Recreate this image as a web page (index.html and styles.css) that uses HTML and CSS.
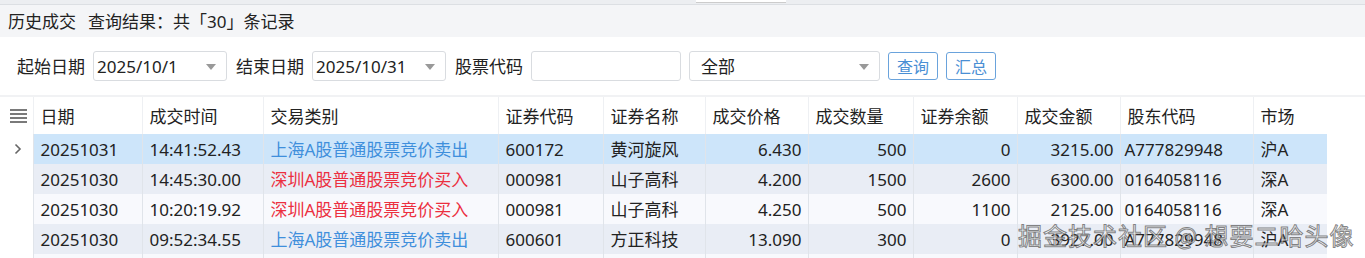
FILE: index.html
```html
<!DOCTYPE html>
<html lang="zh-CN">
<head>
    <meta charset="UTF-8">
    <title>历史成交</title>
    <link rel="stylesheet" href="styles.css">
</head>
<body>
    <div class="topStrip"><span class="tabPiece"></span></div>

    <div class="titleBar">
        <span>历史成交</span>
        <span>查询结果：共「30」条记录</span>
    </div>

    <div class="filterBar">
        <label>起始日期</label>
        <div class="select dateSelect">2025/10/1<i class="arrow"></i></div>
        <label>结束日期</label>
        <div class="select dateSelect">2025/10/31<i class="arrow"></i></div>
        <label>股票代码</label>
        <div class="codeInput"></div>
        <div class="select typeSelect">全部<i class="arrow"></i></div>
        <button class="btn">查询</button>
        <button class="btn">汇总</button>
    </div>

    <div class="tableWrap">
        <table class="grid">
            <colgroup>
                <col style="width:33px">
                <col style="width:109px">
                <col style="width:121px">
                <col style="width:235px">
                <col style="width:105px">
                <col style="width:102px">
                <col style="width:103px">
                <col style="width:105px">
                <col style="width:104px">
                <col style="width:103px">
                <col style="width:133px">
                <col style="width:74px">
            </colgroup>
            <thead>
                <tr>
                    <th class="gutter">
                        <svg width="17" height="14" viewBox="0 0 17 14">
                            <rect x="0" y="0" width="17" height="2" fill="#7a7a7a"/>
                            <rect x="0" y="4" width="17" height="2" fill="#7a7a7a"/>
                            <rect x="0" y="8" width="17" height="2" fill="#7a7a7a"/>
                            <rect x="0" y="12" width="17" height="2" fill="#7a7a7a"/>
                        </svg>
                    </th>
                    <th>日期</th>
                    <th>成交时间</th>
                    <th>交易类别</th>
                    <th>证券代码</th>
                    <th>证券名称</th>
                    <th>成交价格</th>
                    <th>成交数量</th>
                    <th>证券余额</th>
                    <th>成交金额</th>
                    <th>股东代码</th>
                    <th>市场</th>
                </tr>
            </thead>
            <tbody>
                <tr class="selected">
                    <td class="gutter">
                        <svg width="8" height="12" viewBox="0 0 8 12">
                            <path d="M1.5 1.5 L6 6 L1.5 10.5" fill="none" stroke="#666" stroke-width="1.6"/>
                        </svg>
                    </td>
                    <td>20251031</td>
                    <td>14:41:52.43</td>
                    <td class="sell">上海A股普通股票竞价卖出</td>
                    <td>600172</td>
                    <td>黄河旋风</td>
                    <td class="num">6.430</td>
                    <td class="num">500</td>
                    <td class="num">0</td>
                    <td class="num">3215.00</td>
                    <td class="tight">A777829948</td>
                    <td>沪A</td>
                </tr>
                <tr class="even">
                    <td class="gutter"></td>
                    <td>20251030</td>
                    <td>14:45:30.00</td>
                    <td class="buy">深圳A股普通股票竞价买入</td>
                    <td>000981</td>
                    <td>山子高科</td>
                    <td class="num">4.200</td>
                    <td class="num">1500</td>
                    <td class="num">2600</td>
                    <td class="num">6300.00</td>
                    <td class="tight">0164058116</td>
                    <td>深A</td>
                </tr>
                <tr class="odd">
                    <td class="gutter"></td>
                    <td>20251030</td>
                    <td>10:20:19.92</td>
                    <td class="buy">深圳A股普通股票竞价买入</td>
                    <td>000981</td>
                    <td>山子高科</td>
                    <td class="num">4.250</td>
                    <td class="num">500</td>
                    <td class="num">1100</td>
                    <td class="num">2125.00</td>
                    <td class="tight">0164058116</td>
                    <td>深A</td>
                </tr>
                <tr class="even">
                    <td class="gutter"></td>
                    <td>20251030</td>
                    <td>09:52:34.55</td>
                    <td class="sell">上海A股普通股票竞价卖出</td>
                    <td>600601</td>
                    <td>方正科技</td>
                    <td class="num">13.090</td>
                    <td class="num">300</td>
                    <td class="num">0</td>
                    <td class="num">3927.00</td>
                    <td class="tight">A777829948</td>
                    <td>沪A</td>
                </tr>
                <tr class="odd">
                    <td class="gutter"></td>
                    <td></td><td></td><td></td><td></td><td></td><td></td>
                    <td></td><td></td><td></td><td></td><td></td>
                </tr>
            </tbody>
        </table>
        <div class="watermark">掘金技术社区 @ 想要二哈头像</div>
    </div>
</body>
</html>
```

FILE: styles.css
```css
body {
    margin: 0;
    padding: 0;
    width: 1365px;
    height: 258px;
    overflow: hidden;
    background-color: #fff;
    color: #222;
    font-family: "Noto Sans", "Noto Sans CJK SC", sans-serif;
    font-size: 17px;
}
.topStrip {
    height: 4px;
    background-color: #eceef1;
    border-bottom: 1px solid #dcdfe3;
    position: relative;
}
.tabPiece {
    position: absolute;
    left: 696px;
    top: 0;
    width: 90px;
    height: 2px;
    background-color: #fff;
    border-bottom: 1px solid #ccc;
}
.titleBar {
    height: 32px;
    background-color: #f4f5f7;
    display: flex;
    align-items: center;
    gap: 12px;
    padding-left: 8px;
    line-height: 1;
}
.filterBar {
    height: 58px;
    display: flex;
    align-items: center;
    padding-left: 16px;
    gap: 8px;
    line-height: 1;
}
.filterBar label {
    margin-left: 1px;
}
.select,
.codeInput {
    box-sizing: border-box;
    height: 30px;
    border: 1px solid #d9dce0;
    border-radius: 3px;
    background-color: #fff;
    display: flex;
    align-items: center;
    padding-left: 3px;
    position: relative;
}
.dateSelect {
    width: 134px;
}
.codeInput {
    width: 150px;
}
.typeSelect {
    width: 191px;
    padding-left: 11px;
}
.arrow {
    position: absolute;
    right: 10px;
    top: 12px;
    width: 0;
    height: 0;
    border-left: 5px solid transparent;
    border-right: 5px solid transparent;
    border-top: 6px solid #999;
}
.btn {
    box-sizing: border-box;
    height: 28px;
    width: 50px;
    border: 1px solid #6aa3dc;
    border-radius: 3px;
    background-color: #fff;
    color: #4a8fd4;
    font-family: "Noto Sans CJK SC", sans-serif;
    font-size: 16px;
    padding: 0;
    line-height: 1;
}
.tableWrap {
    position: relative;
    border-top: 2px solid #f1f2f4;
}
.grid {
    border-collapse: collapse;
    table-layout: fixed;
    width: 1327px;
    line-height: 1;
}
.grid th {
    height: 35px;
    padding: 2px 7px 0;
    font-weight: normal;
    text-align: left;
    background-color: #fff;
    border-left: 1px solid #eef0f3;
    white-space: nowrap;
}
.grid td {
    height: 30px;
    padding: 0 7px;
    border-left: 1px solid #e0e4ea;
    white-space: nowrap;
    overflow: hidden;
}
.grid th.gutter,
.grid td.gutter {
    border-left: none;
    padding: 0;
    background-color: #fff;
}
.grid th.gutter svg {
    display: block;
    margin-left: 10px;
}
.grid td.gutter svg {
    display: block;
    margin-left: 14px;
}
.grid td.num {
    text-align: right;
    padding-right: 6px;
}
.grid td.tight {
    padding-left: 4px;
}
.grid tr.selected td {
    background-color: #cde5fa;
}
.grid tr.even td {
    background-color: #e9edf5;
}
.grid tr.odd td {
    background-color: #f8f9fd;
}
.grid tr td.gutter {
    background-color: #fff;
}
.sell {
    color: #3f8fdc;
}
.buy {
    color: #ec2f3f;
}
.watermark {
    position: absolute;
    left: 1018px;
    top: 126px;
    font-family: "Noto Sans CJK SC", sans-serif;
    font-size: 24px;
    line-height: 1;
    color: rgba(255, 255, 255, 0.6);
    -webkit-text-stroke: 1px rgba(80, 80, 80, 0.7);
    letter-spacing: 1px;
    white-space: nowrap;
}
```
